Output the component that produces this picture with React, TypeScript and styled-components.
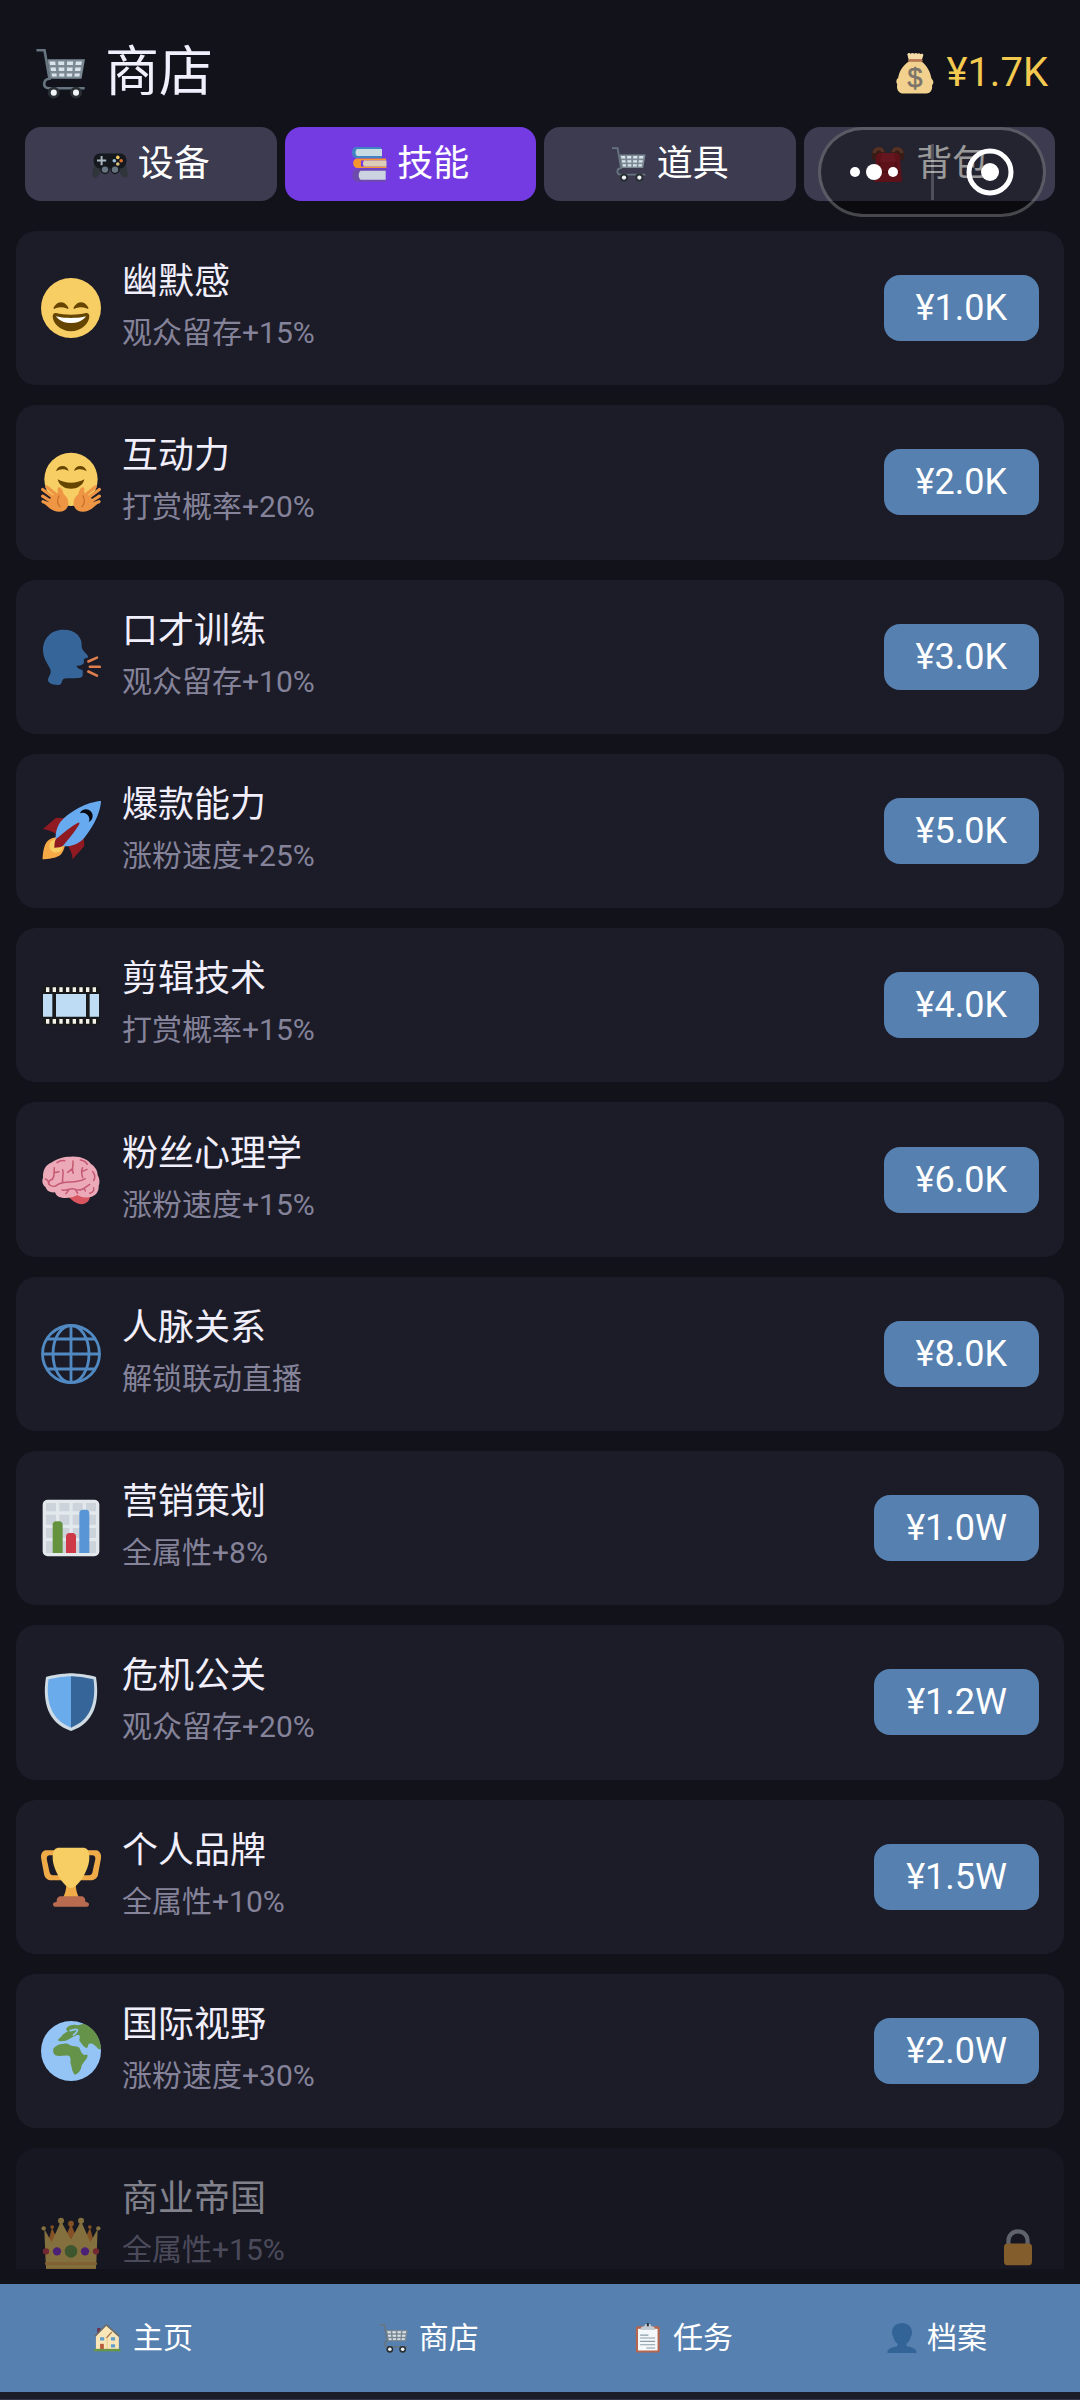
import React, { useState } from "react";
import styled, { createGlobalStyle } from "styled-components";

const GlobalStyle = createGlobalStyle`
  * {
    box-sizing: border-box;
  }
  body {
    margin: 0;
    background: #11121a;
    color: #f1effc;
    font-family: Roboto, "Noto Sans CJK SC", sans-serif;
  }
`;

const Page = styled.div`
  height: 100vh;
  display: flex;
  flex-direction: column;
`;

const Header = styled.header`
  display: flex;
  align-items: center;
  justify-content: space-between;
  padding: 38px 32px 19px 35px;
`;

const Title = styled.h1`
  display: flex;
  align-items: center;
  gap: 18px;
  margin: 0;
  font-size: 54px;
  font-weight: 400;
  line-height: 70px;
`;

const Balance = styled.div`
  display: flex;
  align-items: center;
  gap: 10px;
  font-size: 40px;
  line-height: 70px;
  color: #f3c94f;
`;

const Tabs = styled.div`
  display: flex;
  gap: 8px;
  padding: 0 25px;
`;

const Tab = styled.button<{ $active: boolean }>`
  flex: 1;
  display: flex;
  align-items: center;
  justify-content: center;
  gap: 10px;
  height: 74px;
  padding: 0;
  border: none;
  border-radius: 16px;
  background: ${(p) => (p.$active ? "#753be3" : "#3c3b50")};
  color: #fff;
  font-family: inherit;
  font-size: 36px;
  line-height: 52px;
`;

const Capsule = styled.div`
  position: absolute;
  top: 127px;
  right: 34px;
  display: flex;
  align-items: center;
  width: 228px;
  height: 90px;
  border: 3px solid rgba(255, 255, 255, 0.25);
  border-radius: 45px;
  background: rgba(0, 0, 0, 0.4);
`;

const CapsuleButton = styled.button`
  flex: 1;
  display: flex;
  align-items: center;
  justify-content: center;
  height: 56px;
  padding: 0 4px 0 0;
  border: none;
  background: none;

  & + & {
    padding: 0 0 0 4px;
    border-left: 3px solid rgba(255, 255, 255, 0.2);
  }
`;

const ListArea = styled.main`
  flex: 1;
  min-height: 0;
  margin: 30px 16px 15px;
  overflow: hidden;
`;

const List = styled.ul`
  display: flex;
  flex-direction: column;
  gap: 20px;
  margin: 0;
  padding: 0;
  list-style: none;
`;

const Card = styled.li<{ $locked?: boolean }>`
  display: flex;
  align-items: center;
  gap: 21px;
  min-height: calc(100vw / 7);
  padding: 25px;
  border-radius: 20px;
  background: #1c1c28;
  opacity: ${(p) => (p.$locked ? 0.5 : 1)};
`;

const Info = styled.div<{ $locked?: boolean }>`
  flex: 1;
  min-height: ${(p) => (p.$locked ? "148px" : "104px")};
`;

const Name = styled.h2`
  margin: 0;
  font-size: 36px;
  font-weight: 400;
  line-height: 52px;
`;

const Effect = styled.p`
  margin: 0;
  font-size: 30px;
  line-height: 50px;
  color: #85839a;
`;

const PriceButton = styled.button`
  height: 66px;
  padding: 0 32px;
  border: none;
  border-radius: 16px;
  background: #5680b0;
  color: #fff;
  font-family: inherit;
  font-size: 36px;
  line-height: 52px;
`;

const Nav = styled.nav`
  display: grid;
  grid-template-columns: 9fr 9fr 7fr 9fr;
  height: 108px;
  background: #5680b0;
`;

const NavLink = styled.a`
  display: flex;
  align-items: center;
  justify-content: center;
  gap: 10px;
  color: #fff;
  font-size: 30px;
  line-height: 50px;
  text-decoration: none;
`;

const BottomEdge = styled.div`
  height: 8px;
  background: #1b1d29;
  border-bottom: 1px solid #34344a;
`;

const Svg = styled.svg<{ $size: number }>`
  flex: none;
  display: block;
  width: ${(p) => p.$size}px;
  height: ${(p) => p.$size}px;
`;

type IconProps = { size?: number };

const Icon = ({ size = 60, children }: IconProps & { children: React.ReactNode }) => (
  <Svg $size={size} viewBox="0 0 36 36" aria-hidden="true">
    {children}
  </Svg>
);

const CartIcon = ({ size }: IconProps) => (
  <Icon size={size}>
    <path d="M1 2.2h5.6L10 22C5.4 22.4 5 28.6 9.6 28.6h24.8" fill="none" stroke="#66757f" strokeWidth="1.8" />
    <path d="M8.6 8.4h26L32.2 22H10.6z" fill="#7b8994" />
    <g fill="#dbe3ea">
      <path d="M10 10h4l.3 2.4h-3.9zM16 10h4.2v2.4h-4zM22.2 10h4.2l-.2 2.4h-4zM28.3 10h4.2l-.5 2.4h-4z" />
      <path d="M10.7 14.2h3.7l.2 2.4h-3.5zM16.3 14.2h4v2.4h-3.8zM22.1 14.2h4l-.2 2.4h-3.8zM27.9 14.2h3.9l-.4 2.4h-3.8z" />
      <path d="M11.5 18.3h3.4l.2 2.2h-3.3zM16.7 18.3h3.6v2.2h-3.4zM22 18.3h3.8l-.2 2.2H22zM27.5 18.3h3.6l-.4 2.2h-3.4z" />
    </g>
    <circle cx="13" cy="31.6" r="4.1" fill="#292f33" />
    <circle cx="28.4" cy="31.6" r="4.1" fill="#292f33" />
    <circle cx="13" cy="31.6" r="2.1" fill="#f2f6f9" />
    <circle cx="28.4" cy="31.6" r="2.1" fill="#f2f6f9" />
  </Icon>
);

const MoneyBagIcon = ({ size }: IconProps) => (
  <Icon size={size}>
    <path
      d="M13 8C7 12 4.5 17 3.6 22c-2 1.600-2 4-.8 5.600C1.800 32 4 35.600 8 35.600h19.600c4 0 5.600-3.600 5-7 1.700-1.800 1.600-4-.4-5.600C31 17 28.600 12 23.400 8z"
      fill="#f2d18e"
    />
    <path d="M12.600 6.600 11.400 2c1-1.600 2.200-1.200 2.900-.4 1-1.200 2.200-.8 3 0 1-1 2-.9 2.800 0 1-1 2-.6 2.700.3 1-.8 2.400-.4 2.300.8l-1.200 3.900z" fill="#f5dba6" />
    <rect x="12" y="6.200" width="12.600" height="2" rx="1" fill="#b87550" />
    <text x="18" y="30" textAnchor="middle" fontFamily="Liberation Sans, sans-serif" fontSize="23" fill="#7c746a" stroke="#7c746a" strokeWidth=".5">
      $
    </text>
  </Icon>
);

const GamepadIcon = ({ size }: IconProps) => (
  <Icon size={size}>
    <path d="M3 17c-2 4-3 9-2.600 12.600C1 33 6 32 8 27l3-5zM33 17c2 4 3 9 2.600 12.600C35 33 30 32 28 27l-3-5z" fill="#30353c" />
    <path d="M8 7.400h20c4 0 6.400 3 6.400 7.200 0 4.400-2.400 7.800-6.400 8H8c-4-.2-6.400-3.600-6.400-8C1.600 10.400 4 7.400 8 7.400z" fill="#15181c" />
    <circle cx="13" cy="23.600" r="4.600" fill="#15181c" />
    <circle cx="23" cy="23.600" r="4.600" fill="#15181c" />
    <circle cx="13" cy="23.600" r="3.200" fill="#66757f" />
    <circle cx="23" cy="23.600" r="3.200" fill="#66757f" />
    <path d="M8.600 10h2v3.600h3.600v2h-3.600v3.600h-2v-3.600H5v-2h3.600z" fill="#aab8c2" />
    <circle cx="25.800" cy="11.400" r="1.800" fill="#f3c964" />
    <circle cx="22.300" cy="14.700" r="1.800" fill="#9dbdd9" />
    <circle cx="29.200" cy="14.700" r="1.800" fill="#df6f2b" />
    <circle cx="25.800" cy="18" r="1.800" fill="#d8c47c" />
  </Icon>
);

const BooksIcon = ({ size }: IconProps) => (
  <Icon size={size}>
    <path d="M4.500 1H30v2H8v7h23v2H5C-.5 11 0 2 4.500 1z" fill="#3f83c4" />
    <path d="M6 3h25v7H6C4 8.500 4 4.500 6 3z" fill="#c9dbe2" />
    <path d="M5.500 12.500H35v2H10v6h25.500v1.600H6C1 21 1 13.500 5.500 12.500z" fill="#f4952f" />
    <path d="M13 14.500h22.500v6H13c-1.500-1.600-1.500-4.400 0-6z" fill="#dccdb9" />
    <path d="M5.500 22.800H35v2H10v9h25v2H5.500C0 34.500 0 24 5.500 22.800z" fill="#6c4bad" />
    <path d="M9.500 24.800h25.200v9H9.500c-2.400-2.200-2.400-6.800 0-9z" fill="#ccd3e0" />
  </Icon>
);

const BackpackIcon = ({ size }: IconProps) => (
  <Icon size={size}>
    <path d="M3 15C0 7 3 1 9 1c4 0 6 3 6 6M33 15c3-8 0-14-6-14-4 0-6 3-6 6" fill="#5f3024" />
    <path d="M4 7c1-5 8-6 9-1M32 7c-1-5-8-6-9-1" fill="none" stroke="#91563f" strokeWidth="3" />
    <path d="M10 7h16c3 0 4 2 4 5l2 22c0 1.400-1 2-2 2H6c-1 0-2-.6-2-2l2-22c0-3 1-5 4-5z" fill="#9c1f2b" />
    <path d="M12 7h12l2 9H10z" fill="#a82633" />
    <path d="M6 26h24M10 16v9M26 16v9" stroke="#7c1620" strokeWidth="1.400" />
  </Icon>
);

const SmileIcon = () => (
  <Icon>
    <circle cx="18" cy="18" r="18" fill="#f7ce63" />
    <path
      d="M28.457 17.797c-.06-.135-1.499-3.297-4.457-3.297-2.957 0-4.397 3.162-4.457 3.297-.092.207-.032.449.145.591.175.142.426.147.61.014.012-.009 1.262-.902 3.702-.902 2.426 0 3.674.881 3.702.901.088.066.194.099.298.099.11 0 .221-.037.312-.109.177-.142.238-.386.145-.594zm-12 0c-.06-.135-1.499-3.297-4.457-3.297-2.957 0-4.397 3.162-4.457 3.297-.092.207-.032.449.144.591.176.142.427.147.61.014.013-.009 1.262-.902 3.703-.902 2.426 0 3.674.881 3.702.901.088.066.194.099.298.099.11 0 .221-.037.312-.109.178-.142.237-.386.145-.594zM18 22c-3.623 0-6.027-.422-9-1-.679-.131-2 0-2 2 0 4 4.595 9 11 9 6.404 0 11-5 11-9 0-2-1.321-2.132-2-2-2.973.578-5.377 1-9 1z"
      fill="#664500"
    />
    <path d="M9 23s3 1 9 1 9-1 9-1-2 4-9 4-9-4-9-4z" fill="#fff" />
  </Icon>
);

const HugIcon = () => (
  <Icon>
    <circle cx="18" cy="16.400" r="16" fill="#f7ce63" />
    <path d="M9 11.600c1-4.200 6.600-4.400 7.600-.2-2.200-1.500-5.400-1.400-7.600.2zM19.800 11.400c1-4.200 6.600-4 7.600.2-2.200-1.600-5.400-1.700-7.600-.2z" fill="#664500" />
    <path d="M10 16.400c4.600 2.800 11.400 2.800 16 0-1.600 7.600-14.400 7.600-16 0z" fill="#664500" />
    {["", "matrix(-1 0 0 1 36 0)"].map((t) => (
      <g key={t} transform={t || undefined}>
        <path d="M6.500 30 1 26.500M7 27 1 22.500M9 25.500 3.500 21M7 32 1.200 29.800" stroke="#ef9645" strokeWidth="1.900" strokeLinecap="round" />
        <path d="M4.500 30.500C5 27.500 8 25.500 10 24.500c.2-1.800-.4-3 .6-3.300 1.800-.2 2.400 2 3 4 1.400 1.200 2.800 2.800 2.900 5.300 0 3-2 5.400-5.600 5.400-3.400 0-6.400-2.400-9-5z" fill="#ef9645" />
        <path d="M11 26c-1.500 2.500-1.300 5 .6 7" fill="none" stroke="#c56f29" strokeWidth=".7" />
      </g>
    ))}
  </Icon>
);

const SpeakingIcon = () => (
  <Icon>
    <path
      d="M13.400 1.700C5.600 1.700 1.200 7.400 1.200 14c0 6 4.400 9.600 4.600 12.400.1 2.400-1.600 3.600-1.600 5.400 0 2 3 3.200 7.200 2.900 1.600-1.400 1-3.500 3-3.800 2.600-.4 6.600.2 9.400-.6 1.600-.4 1.200-1.800 1.200-4.400-1.600-.4-3.200-1.200-3.800-2.700 1.800.4 3.600-.2 4.400-1.400.6-1-.5-2 .6-2.900 1.400-.2 2.300-.5 2-1.400-.6-1.400-3.400-3.100-3.800-5.500.6-5.600-3.400-10.300-11-10.300z"
      fill="#366699"
    />
    <path d="m28.400 20.700 5.200-2.300M29.300 23.900h6M28.400 26.700l5.200 2.500" stroke="#e07f4e" strokeWidth="1.500" strokeLinecap="round" />
  </Icon>
);

const RocketIcon = () => (
  <Icon>
    <path d="M1 17l8-7 16 1 1 16-7 8s.001-5.999-6-12-12-6-12-6z" fill="#8f1a22" />
    <path d="M.973 35s-.036-7.979 2.985-11S15 21.187 15 21.187 14.999 29 11.999 32c-3 3-11.026 3-11.026 3z" fill="#f5a947" />
    <circle cx="9" cy="27" r="4" fill="#f7ce63" />
    <path d="M35.999 0s-10 0-22 10c-6 5-6 14-4 16s11 2 16-4c10-12 10-22 10-22z" fill="#68aaf0" />
    <path d="M26.999 5c-1.623 0-3.013.971-3.641 2.360.502-.227 1.055-.360 1.641-.360 2.209 0 4 1.791 4 4 0 .586-.133 1.139-.359 1.640 1.389-.627 2.359-2.017 2.359-3.640 0-2.209-1.791-4-4-4z" fill="#070a10" />
    <path d="M8 28s0-4 1-5 13.001-10.999 14-10-9.001 13-10.001 14S8 28 8 28z" fill="#8f1a22" />
  </Icon>
);

const FilmIcon = () => (
  <Icon>
    <path d="M.8 6.600h34.400v23.200H.8z" fill="#191a1b" />
    <path d="M1.200 11.400h5.600V25H1.200zM9 11.400h18V25H9zM29.200 11.400h5.600V25h-5.600z" fill="#bfdcf5" />
    {[3, 7, 11, 15, 19, 23, 27, 31].map((x) => (
      <path key={x} d={`M${x} 7.400h2v2.800h-2zM${x} 26.400h2v2.800h-2z`} fill="#f5f3ea" />
    ))}
  </Icon>
);

const BrainIcon = () => (
  <Icon>
    <path d="M14.600 26.600c3 2 5 5.600 9.600 5.900 3 0 5.400-2.100 5.200-5.500z" fill="#d9555f" />
    <path
      d="M18 4c5.600-.4 10.200 1.800 12 4.400 2.600 1.600 4 4.400 4 6.600 1.200 2.200 1.400 4.600.6 6.600.2 3.600-2 6.400-6 6.800-3 .6-5-.6-7-1.400-3 1.800-6 1.900-9 1.600-2.600-.2-3.600-1.600-4.200-3.200-3 .4-5-1-5.600-3-2-1.600-2.400-4-1.600-5.600C1 11.600 3 9 6.600 7.400 9.600 5 14 3.900 18 4z"
      fill="#ecaab9"
    />
    <g fill="none" stroke="#c55a72" strokeWidth=".9" strokeLinecap="round">
      <path d="M2.600 17.400c1.600.4 2 1.600 2 3 1.600 1.800 3.800 1.800 5.400.4 5-3.400 10 .2 16.600-3.600" />
      <path d="M4.600 20.400c0-1.400.8-2.600 2.400-2.800M8 10.600c-.4 3 .4 5-1 6.400M7.800 13.600l3-.6M13 19.200c-.4-3 .8-4.600 0-7.400M19.200 6.600c.4 3-1.200 5 .2 7.400M19 11l-3 2.400M25 10.600c-1.400 2.400-.4 4.400 0 6M24.600 13l3-1.400" />
      <path d="M9.600 7.600c1.600-1.200 3-1.600 4.600-1.200M23.600 6c2 .2 3.400 1.200 4.200 2.600M31 13c1.400 1.600 1.600 3.600.6 5.400M12.600 24c3 .6 5-1.600 8-.4 3.400 1.200 5-.4 8.600-3M15 26.200l1.600-2.200M22 26l-1.400-2.400M26.600 24.600l-.8-1.600M31.600 22.600c.4 1.600-.6 3.200-2.400 3.400" />
    </g>
  </Icon>
);

const GlobeIcon = () => (
  <Icon>
    <g fill="none" stroke="#5189c2" strokeWidth="1.700">
      <circle cx="18" cy="18" r="17.100" />
      <ellipse cx="18" cy="18" rx="10.800" ry="17.100" />
      <path d="M18 .8v34.400M.8 18h34.400M3.400 9h29.200M3.400 27h29.200" />
    </g>
  </Icon>
);

const ChartIcon = () => (
  <Icon>
    <rect x="1" y="1" width="34" height="34" rx="3" fill="#e3e8ed" />
    <path d="M3 3h6v5H3zM11 3h6v5h-6zM19 3h6v5h-6zM27 3h6v5h-6zM3 10h6v6H3zM11 10h6v6h-6zM19 10h6v6h-6zM27 10h6v6h-6zM3 18h6v6H3zM11 18h6v6h-6zM19 18h6v6h-6zM27 18h6v6h-6zM3 26h6v7H3zM11 26h6v7h-6zM19 26h6v7h-6zM27 26h6v7h-6z" fill="#ccd3da" />
    <path d="M7 33V16c0-1.200.8-2 2-2h2c1.200 0 2 .8 2 2v17z" fill="#64923f" />
    <path d="M15 33V23c0-1.200.8-2 2-2h2c1.200 0 2 .8 2 2v10z" fill="#cf3a49" />
    <path d="M23 33V9c0-1.200.8-2 2-2h2c1.200 0 2 .8 2 2v24z" fill="#5795d6" />
  </Icon>
);

const ShieldIcon = () => (
  <Icon>
    <path d="M33 3c-7-2-15-2.200-15-2.200S10 1 3 3C.6 18 4 30.600 18 35.400 32 30.600 35.400 18 33 3z" fill="#cfdbe4" />
    <path d="M18 33.400C6.600 29 2.600 18.600 4.500 4.400 11 2.600 18 2.500 18 2.500z" fill="#6aabec" />
    <path d="M18 33.400C29.400 29 33.400 18.600 31.500 4.400 25 2.600 18 2.500 18 2.500z" fill="#366699" />
  </Icon>
);

const TrophyIcon = () => (
  <Icon>
    <path
      d="M5.123 5h6C12.227 5 13 4.896 13 6V4c0-1.104-.773-2-1.877-2h-8c-2 0-3.583 2.125-3 5 0 0 1.791 9.375 1.917 9.958C2.373 18.500 4.164 20 6.081 20h6.958c1.105 0-.039-1.896-.039-3v-2c0 1.104-.773 2-1.877 2h-4c-1.104 0-1.833-1.042-2-2S3.539 7.667 3.539 7.667C3.206 5.750 4.018 5 5.123 5zm25.812 0h-6C23.831 5 22 4.896 22 6V4c0-1.104 1.831-2 2.935-2h8c2 0 3.584 2.125 3 5 0 0-1.633 9.419-1.771 10-.354 1.500-2.042 3-4 3h-7.146C21.914 20 22 18.104 22 17v-2c0 1.104 1.831 2 2.935 2h4c1.104 0 1.834-1.042 2-2s1.584-7.333 1.584-7.333C32.851 5.750 32.040 5 30.935 5zM20.832 22h-5.600c0 7-3.400 10-3.400 10h12.292s-3.292-3.042-3.292-10z"
      fill="#f0ab49"
    />
    <path d="M29 6.600C29 13.400 22.200 24.600 18 24.600S7 13.400 7 6.600C7 1.400 8.600.4 11 .4h14c2.400 0 4 1 4 6.200z" fill="#f7ce63" />
    <path d="M9.400 33v-1c0-1.100 1.200-2.400 2.300-2.400h12.600c1.100 0 2.300 1.300 2.300 2.400v1c1.600 0 2.200.6 2.200 1.400 0 1-.4 1.400-1.300 1.400h-19c-.9 0-1.300-.4-1.300-1.400 0-.8.6-1.400 2.200-1.400z" fill="#b96b50" />
  </Icon>
);

const EarthIcon = () => (
  <Icon>
    <circle cx="18" cy="18" r="18" fill="#93c4f5" />
    <path
      d="M7.600 16.400c1.400-1.600 3.200-2.600 5-2.600 2.200-.6 3.800-.4 4.800.8 2 .8 4.200.4 5.600 1.400.8 1.600 1.200 3.600 2.600 4.200.8.400 2-.2 2.400.4-.2 2.800-3.400 4.400-3.800 7.200-.4 2.200-2 3.800-3.600 4.400-1.800-1-2-4-2.600-6-.8-2 .4-3.200-1-5.200-2.600-.8-6 .8-8.400-.4-1.400-1-1.700-3-1-4.200z"
      fill="#66934a"
    />
    <path
      d="M10 11.400c1-.6 1-1.600 2.200-2 .6-1.600 2.600-2.400 4-3.200-.8-.4-1.400-1-.8-2 1.400-1.600 4.400-2.400 6.800-1.600l3.400-1C31.600 3.800 35.400 9.600 36 16c-.2 1.200-1.400 1.200-2 .4-1.400-2-3.400-3.400-5.200-2.800-.8.8-.2 2-1.600 2.600-1.800-.6-2.600-2.400-4-4-.6-1.400.6-2.600-.2-3.600-1.800-.6-3.200 1-5 1.600-1.600 1-3 2-4.600 1.800-1 .2-2.600.4-3.400-.6z"
      fill="#66934a"
    />
    <path d="M17.500 5.800c2-.2 3-1.400 4.400-.4 0 1.400-1.400 1.800-2.400 3" fill="none" stroke="#93c4f5" strokeWidth="1" strokeLinecap="round" />
    <path d="M24 15.400c1 1.600 1.600 3.200 3.400 3.400 1.400-.4 2.600-1.400 3-2.600" fill="none" stroke="#93c4f5" strokeWidth="1" />
  </Icon>
);

const CrownIcon = () => (
  <Icon>
    <path d="M4 16 6.600 6.500 11 16zM14 14 18 4l4 10zM25 16l4.400-9.500L32 16z" fill="#f4902c" />
    <g fill="#f4902c">
      <circle cx="6.700" cy="6" r="1.100" />
      <circle cx="18" cy="4" r="1.700" />
      <circle cx="29.300" cy="6" r="1.100" />
    </g>
    <g fill="#f7ce63">
      <path d="M2 7.200 6.400 15.200 12 2.400 18 13.600 24 2.400l5.600 12.800L34 7.200l-.8 20H2.800z" />
      <circle cx="12" cy="2.200" r="1.800" />
      <circle cx="24" cy="2.200" r="1.800" />
      <circle cx="1.600" cy="6.800" r="1.300" />
      <circle cx="34.400" cy="6.800" r="1.300" />
    </g>
    <path d="M3 27h30c1 .6 1 1.400 0 2v6H3v-6c-1-.6-1-1.400 0-2z" fill="#eeb24d" />
    <path d="M3 29h30v1.400H3z" fill="#f7ce63" />
    <circle cx="18" cy="20.600" r="3.800" fill="#6a9a43" />
    <circle cx="9.600" cy="20.600" r="2.500" fill="#8230cf" />
    <circle cx="26.400" cy="20.600" r="2.500" fill="#8230cf" />
    <circle cx="3" cy="20.600" r="1.900" fill="#d13e48" />
    <circle cx="33" cy="20.600" r="1.900" fill="#d13e48" />
  </Icon>
);

const LockIcon = () => (
  <Icon size={42}>
    <path d="M9.800 18v-5.200C9.800 8 13.400 4.600 18 4.600s8.200 3.400 8.200 8.200V18" fill="none" stroke="#aab3bd" strokeWidth="3.600" />
    <rect x="6" y="15" width="24" height="18.600" rx="3" fill="#f5a93f" />
  </Icon>
);

const HouseIcon = ({ size }: IconProps) => (
  <Icon size={size}>
    <path d="M5 6h4v10H5z" fill="#6b3550" />
    <path d="M3.500 15 16 2l15 13v17H3.500z" fill="#f8e6b8" />
    <path d="M2.500 16 16 2.200 31.500 16" fill="none" stroke="#6d6a63" strokeWidth="1.800" />
    <path d="M16 18l6.500-7" fill="none" stroke="#a9744b" strokeWidth="1.600" />
    <path d="M17 17v15" stroke="#e5c988" strokeWidth="1.200" />
    <path d="M8.500 17h5v4h-5zM21.500 17h5v4h-5zM21.500 25.500h5v4h-5z" fill="#5f9fc9" />
    <path d="M8.500 25h4.500v7H8.500z" fill="#bb5a38" />
    <path d="M1 31h32v3H1z" fill="#679548" />
  </Icon>
);

const ClipboardIcon = ({ size }: IconProps) => (
  <Icon size={size}>
    <rect x="3.500" y="4" width="28.500" height="31.500" rx="2" fill="#b5664e" />
    <path d="M6 7h23.500v26H6z" fill="#f5f8fa" />
    <path d="M9 8.500C9 5 11 4 13.500 4 14 1.600 16 1 17.800 1s3.800.6 4.200 3c2.500 0 4.600 1 4.600 4.500z" fill="#c3cbd3" />
    <path d="M16.600 0h2.400v4h-2.400z" fill="#27313a" />
    <path d="M8.500 14.500h10M8.500 18h18M8.500 22h18M8.500 26h18M16 30h10.500" stroke="#8b9cab" strokeWidth="1.300" />
  </Icon>
);

const PersonIcon = ({ size }: IconProps) => (
  <Icon size={size}>
    <path
      d="M18 0c7 0 12 4.600 12 11.400 0 2.400-.6 3.800-1.400 4.800-.6 4.400-3.200 7.400-5.400 8.800-.2 1.200 0 2.200.6 3 3 .8 11.400 1.600 11.800 7.400 0 .4-.4.6-.8.6H1.200c-.4 0-.8-.2-.8-.6C.8 29.600 9.200 28.800 12.200 28c.6-.8.8-1.800.6-3-2.200-1.400-4.800-4.400-5.400-8.800C6.600 15.200 6 13.800 6 11.400 6 4.600 11 0 18 0z"
      fill="#336497"
    />
  </Icon>
);

const tabs = [
  { name: "设备", icon: GamepadIcon },
  { name: "技能", icon: BooksIcon },
  { name: "道具", icon: CartIcon },
  { name: "背包", icon: BackpackIcon },
];

const skills = [
  { name: "幽默感", effect: "观众留存+15%", price: "¥1.0K", icon: SmileIcon },
  { name: "互动力", effect: "打赏概率+20%", price: "¥2.0K", icon: HugIcon },
  { name: "口才训练", effect: "观众留存+10%", price: "¥3.0K", icon: SpeakingIcon },
  { name: "爆款能力", effect: "涨粉速度+25%", price: "¥5.0K", icon: RocketIcon },
  { name: "剪辑技术", effect: "打赏概率+15%", price: "¥4.0K", icon: FilmIcon },
  { name: "粉丝心理学", effect: "涨粉速度+15%", price: "¥6.0K", icon: BrainIcon },
  { name: "人脉关系", effect: "解锁联动直播", price: "¥8.0K", icon: GlobeIcon },
  { name: "营销策划", effect: "全属性+8%", price: "¥1.0W", icon: ChartIcon },
  { name: "危机公关", effect: "观众留存+20%", price: "¥1.2W", icon: ShieldIcon },
  { name: "个人品牌", effect: "全属性+10%", price: "¥1.5W", icon: TrophyIcon },
  { name: "国际视野", effect: "涨粉速度+30%", price: "¥2.0W", icon: EarthIcon },
  // no price: still locked
  { name: "商业帝国", effect: "全属性+15%", price: null, icon: CrownIcon },
];

const navItems = [
  { name: "主页", icon: HouseIcon },
  { name: "商店", icon: CartIcon },
  { name: "任务", icon: ClipboardIcon },
  { name: "档案", icon: PersonIcon },
];

const App: React.FC = () => {
  const [activeTab, setActiveTab] = useState("技能");

  return (
    <Page>
      <GlobalStyle />
      <Header>
        <Title>
          <CartIcon size={52} />
          商店
        </Title>
        <Balance>
          <MoneyBagIcon size={42} />
          ¥1.7K
        </Balance>
      </Header>

      <Tabs>
        {tabs.map(({ name, icon: TabIcon }) => (
          <Tab key={name} type="button" $active={name === activeTab} onClick={() => setActiveTab(name)}>
            <TabIcon size={36} />
            {name}
          </Tab>
        ))}
      </Tabs>

      <ListArea>
        <List>
          {skills.map(({ name, effect, price, icon: SkillIcon }) => (
            <Card key={name} $locked={!price}>
              <SkillIcon />
              <Info $locked={!price}>
                <Name>{name}</Name>
                <Effect>{effect}</Effect>
              </Info>
              {price ? <PriceButton type="button">{price}</PriceButton> : <LockIcon />}
            </Card>
          ))}
        </List>
      </ListArea>

      <Nav>
        {navItems.map(({ name, icon: NavIcon }) => (
          <NavLink key={name} href="#">
            <NavIcon size={30} />
            {name}
          </NavLink>
        ))}
      </Nav>
      <BottomEdge />

      {/* floating menu over the tabs */}
      <Capsule>
        <CapsuleButton type="button" aria-label="更多">
          <svg width="48" height="20" viewBox="0 0 48 20" fill="#fff">
            <circle cx="5" cy="10" r="5" />
            <circle cx="24" cy="10" r="8" />
            <circle cx="43" cy="10" r="5" />
          </svg>
        </CapsuleButton>
        <CapsuleButton type="button" aria-label="关闭">
          <svg width="48" height="48" viewBox="0 0 48 48">
            <circle cx="24" cy="24" r="21" fill="none" stroke="#fff" strokeWidth="5" />
            <circle cx="24" cy="24" r="9" fill="#fff" />
          </svg>
        </CapsuleButton>
      </Capsule>
    </Page>
  );
};

export default App;
